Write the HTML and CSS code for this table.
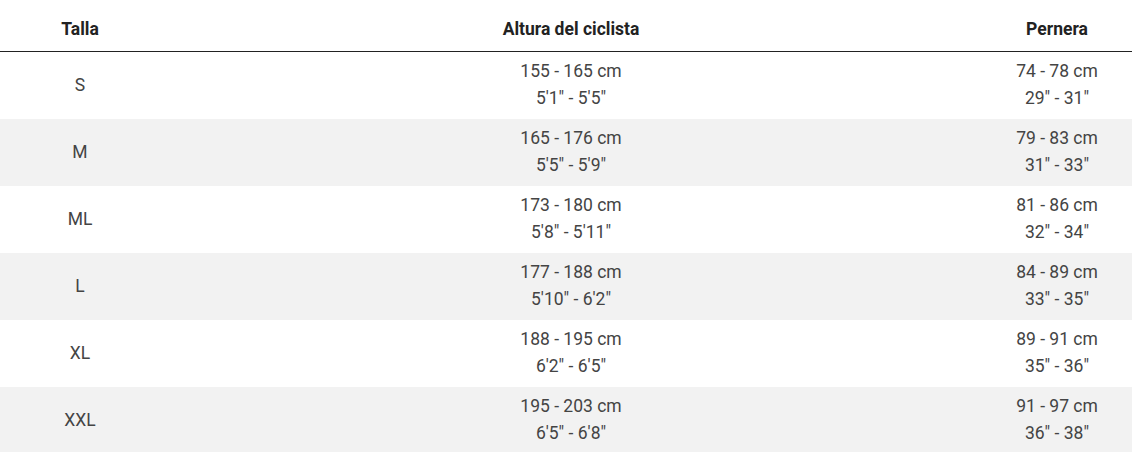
FILE: index.html
```html
<!DOCTYPE html>
<html lang="es">
<head>
<meta charset="utf-8">
<title>Tallas</title>
<link rel="stylesheet" href="styles.css">
</head>
<body>
<table class="size-table">
  <thead>
    <tr>
      <th class="col-size">Talla</th>
      <th class="col-height">Altura del ciclista</th>
      <th class="col-leg">Pernera</th>
    </tr>
  </thead>
  <tbody>
    <tr><td>S</td><td>155 - 165 cm<br>5'1" - 5'5"</td><td>74 - 78 cm<br>29" - 31"</td></tr>
    <tr><td>M</td><td>165 - 176 cm<br>5'5" - 5'9"</td><td>79 - 83 cm<br>31" - 33"</td></tr>
    <tr><td>ML</td><td>173 - 180 cm<br>5'8" - 5'11"</td><td>81 - 86 cm<br>32" - 34"</td></tr>
    <tr><td>L</td><td>177 - 188 cm<br>5'10" - 6'2"</td><td>84 - 89 cm<br>33" - 35"</td></tr>
    <tr><td>XL</td><td>188 - 195 cm<br>6'2" - 6'5"</td><td>89 - 91 cm<br>35" - 36"</td></tr>
    <tr><td>XXL</td><td>195 - 203 cm<br>6'5" - 6'8"</td><td>91 - 97 cm<br>36" - 38"</td></tr>
  </tbody>
</table>
</body>
</html>
```
FILE: styles.css
```css
html, body {
  margin: 0;
  padding: 0;
  background: #fff;
}
body {
  font-family: Roboto, "Liberation Sans", Arial, sans-serif;
}
.size-table {
  width: 1132px;
  border-collapse: collapse;
  table-layout: fixed;
}
.col-size { width: 160px; }
.col-leg { width: 150px; }
.size-table th {
  height: 51px;
  padding: 0;
  font-size: 17.5px;
  font-weight: 700;
  color: #222;
  text-align: center;
  vertical-align: middle;
  border-bottom: 1px solid #222;
  box-sizing: border-box;
  padding-top: 8px;
}
.size-table td {
  height: 67px;
  padding: 0;
  font-size: 17.5px;
  line-height: 27px;
  color: #444;
  text-align: center;
  vertical-align: middle;
}
.size-table tbody tr:nth-child(even) td {
  background: #f2f2f2;
}
```
